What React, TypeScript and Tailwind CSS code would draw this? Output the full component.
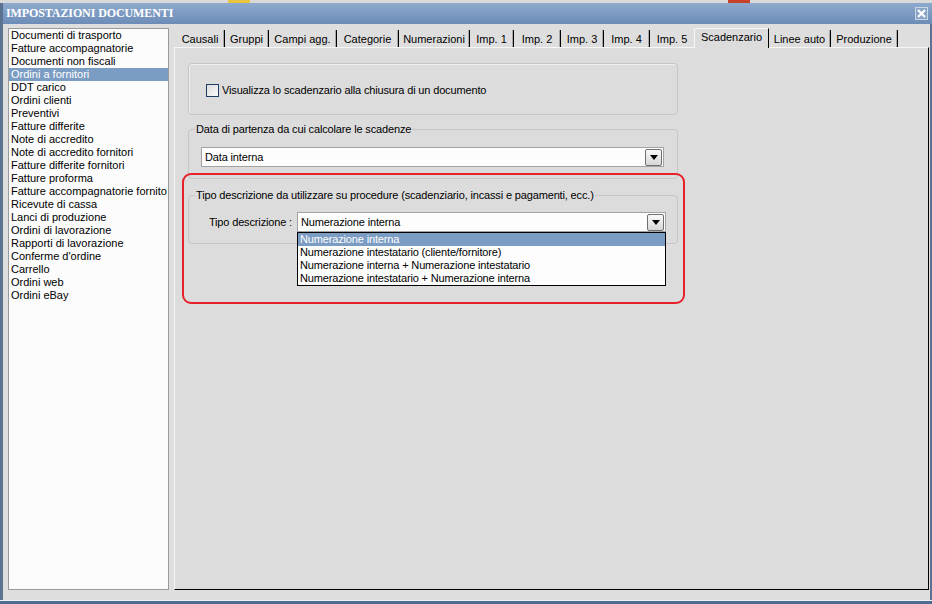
import React from 'react';

const docTypes = [
    'Documenti di trasporto',
    'Fatture accompagnatorie',
    'Documenti non fiscali',
    'Ordini a fornitori',
    'DDT carico',
    'Ordini clienti',
    'Preventivi',
    'Fatture differite',
    'Note di accredito',
    'Note di accredito fornitori',
    'Fatture differite fornitori',
    'Fatture proforma',
    'Fatture accompagnatorie fornito',
    'Ricevute di cassa',
    'Lanci di produzione',
    'Ordini di lavorazione',
    'Rapporti di lavorazione',
    "Conferme d'ordine",
    'Carrello',
    'Ordini web',
    'Ordini eBay',
];

const tabs = [
    { label: 'Causali', w: 'w-[49px]' },
    { label: 'Gruppi', w: 'w-[44px]' },
    { label: 'Campi agg.', w: 'w-[68px]' },
    { label: 'Categorie', w: 'w-[62px]' },
    { label: 'Numerazioni', w: 'w-[71px]' },
    { label: 'Imp. 1', w: 'w-[44px]' },
    { label: 'Imp. 2', w: 'w-[47px]' },
    { label: 'Imp. 3', w: 'w-[43px]' },
    { label: 'Imp. 4', w: 'w-[46px]' },
    { label: 'Imp. 5', w: 'w-[44px]', noSep: true },
    { label: 'Scadenzario', w: 'w-[75px]', active: true },
    { label: 'Linee auto', w: 'w-[62px]' },
    { label: 'Produzione', w: 'w-[67px]' },
];

const options = [
    'Numerazione interna',
    'Numerazione intestatario (cliente/fornitore)',
    'Numerazione interna + Numerazione intestatario',
    'Numerazione intestatario + Numerazione interna',
];

function ComboButton() {
    return (
        <div className="w-[17px] h-[17px] mr-[1px] rounded-[2px] border border-[#707070] bg-gradient-to-b from-[#fafafa] to-[#d6d6d6] flex items-center justify-center">
            <svg width="8" height="5" viewBox="0 0 8 5">
                <path d="M0 0 H8 L4 5 Z" fill="#000" />
            </svg>
        </div>
    );
}

function Combo({ value, children }: { value: string; children?: React.ReactNode }) {
    return (
        <div className="relative flex-1 h-[20px] border border-[#a3a3a3] bg-[#fdfdfd] flex items-center justify-between pl-[3px]">
            <span>{value}</span>
            <ComboButton />
            {children}
        </div>
    );
}

export default function App() {
    return (
        <div
            className="w-[932px] h-[604px] overflow-hidden flex flex-col bg-[#dedede] text-black text-[11px] leading-[13px]"
            style={{ fontFamily: '"Liberation Sans", Arial, sans-serif' }}
        >
            {/* strip of the window behind */}
            <div className="h-[3px] flex bg-[#d9d9d9]">
                <div className="w-[228px]" />
                <div className="w-[22px] bg-[#e8c640]" />
                <div className="w-[478px]" />
                <div className="w-[22px] bg-[#c8402a]" />
            </div>

            {/* title bar */}
            <div className="h-[21px] flex items-center justify-between bg-gradient-to-b from-[#8ea9cd] to-[#6c8cb7] border-l-[3px] border-[#5b7391] pl-[3px] pr-[4px]">
                <span
                    className="text-white font-bold text-[12px] tracking-[-0.1px]"
                    style={{ fontFamily: '"Liberation Serif", "Times New Roman", serif' }}
                >
                    IMPOSTAZIONI DOCUMENTI
                </span>
                <div className="w-[13px] h-[13px] border border-[#c9d6e6] bg-[#8aa4c8] flex items-center justify-center">
                    <svg width="9" height="9" viewBox="0 0 9 9">
                        <path d="M1 1 L8 8 M8 1 L1 8" stroke="#fff" strokeWidth="2.2" />
                    </svg>
                </div>
            </div>

            {/* body */}
            <div className="flex-1 flex gap-[5px] pt-[3px] pb-[10px] pl-[5px] pr-[1px] border-l-[3px] border-r-[2px] border-l-[#5b7391] border-r-[#5b7391] min-h-0">
                {/* document types list */}
                <div className="mt-[1px] w-[161px] border border-[#9a9a9a] bg-[#fcfcfc] overflow-hidden">
                    {docTypes.map((d) => (
                        <div
                            key={d}
                            className={
                                'h-[13px] px-[2px] whitespace-nowrap ' +
                                (d === 'Ordini a fornitori' ? 'bg-[#7b9cc3] text-white' : '')
                            }
                        >
                            {d}
                        </div>
                    ))}
                </div>

                {/* tabs + page */}
                <div className="flex-1 flex flex-col">
                    <div className="h-[20px] flex items-end pl-[2px]">
                        {tabs.map((t) =>
                            t.active ? (
                                <div
                                    key={t.label}
                                    className={t.w + ' h-[20px] flex items-center justify-center pb-[2px] bg-[#dcdcdc] border-t border-l border-[#f6f6f6] border-r border-r-black rounded-tl-[2px] -mb-[1px] relative z-10'}
                                >
                                    {t.label}
                                </div>
                            ) : (
                                <div
                                    key={t.label}
                                    className={
                                        t.w +
                                        ' h-[17px] flex items-center justify-center pt-[1px] ' +
                                        (t.noSep ? '' : 'border-r border-r-black shadow-[inset_-1px_0_0_#a8a8a8]')
                                    }
                                >
                                    {t.label}
                                </div>
                            )
                        )}
                    </div>

                    <div className="relative flex-1 bg-[#dcdcdc] border-t border-l border-[#f6f6f6] border-r border-b border-r-black border-b-black pl-[13px] pt-[15px] tracking-[-0.15px]">
                        <div className="w-[490px] flex flex-col">
                            {/* group 1 */}
                            <div className="h-[52px] rounded-[4px] border border-[#c6c6c6] shadow-[inset_1px_1px_0_#efefef] flex items-center pl-[17px] pt-[3px] gap-[3px]">
                                <div className="w-[13px] h-[13px] border border-[#1f3d63] bg-gradient-to-br from-[#dcdcdc] to-[#fafafa]" />
                                <span>Visualizza lo scadenzario alla chiusura di un documento</span>
                            </div>

                            {/* group 2 */}
                            <fieldset className="mt-[8px] rounded-[4px] border border-[#c6c6c6] px-[6px] pb-[11px]">
                                <legend className="px-[1px] leading-[13px]">Data di partenza da cui calcolare le scadenze</legend>
                                <div className="mt-[11px] ml-[6px] mr-[7px] flex">
                                    <Combo value="Data interna" />
                                </div>
                            </fieldset>

                            {/* group 3 */}
                            <fieldset className="mt-[10px] rounded-[4px] border border-[#c6c6c6] px-[6px] pb-[11px]">
                                <legend className="px-[1px] leading-[13px]">
                                    Tipo descrizione da utilizzare su procedure (scadenziario, incassi e pagamenti, ecc.)
                                </legend>
                                <div className="mt-[10px] ml-[6px] mr-[5px] flex items-center">
                                    <span className="w-[96px] text-right pr-[5px]">Tipo descrizione :</span>
                                    <Combo value="Numerazione interna">
                                        <div className="absolute left-[-1px] right-[-1px] top-[19px] border border-black bg-[#fdfdfd] z-20">
                                            {options.map((o, i) => (
                                                <div
                                                    key={o}
                                                    className={'h-[13px] pl-[2px] whitespace-nowrap ' + (i === 0 ? 'bg-[#7b9cc3] text-white' : '')}
                                                >
                                                    {o}
                                                </div>
                                            ))}
                                        </div>
                                    </Combo>
                                </div>
                            </fieldset>
                        </div>

                        {/* red highlight annotation */}
                        <div className="absolute left-[7px] top-[125px] w-[503px] h-[131px] border-[2px] border-[#e8202a] rounded-[9px] pointer-events-none z-30" />
                    </div>
                </div>
            </div>

            {/* bottom frame */}
            <div className="h-[4px] bg-[#4f6b8f] border-t border-[#eef2f6]" />
        </div>
    );
}
